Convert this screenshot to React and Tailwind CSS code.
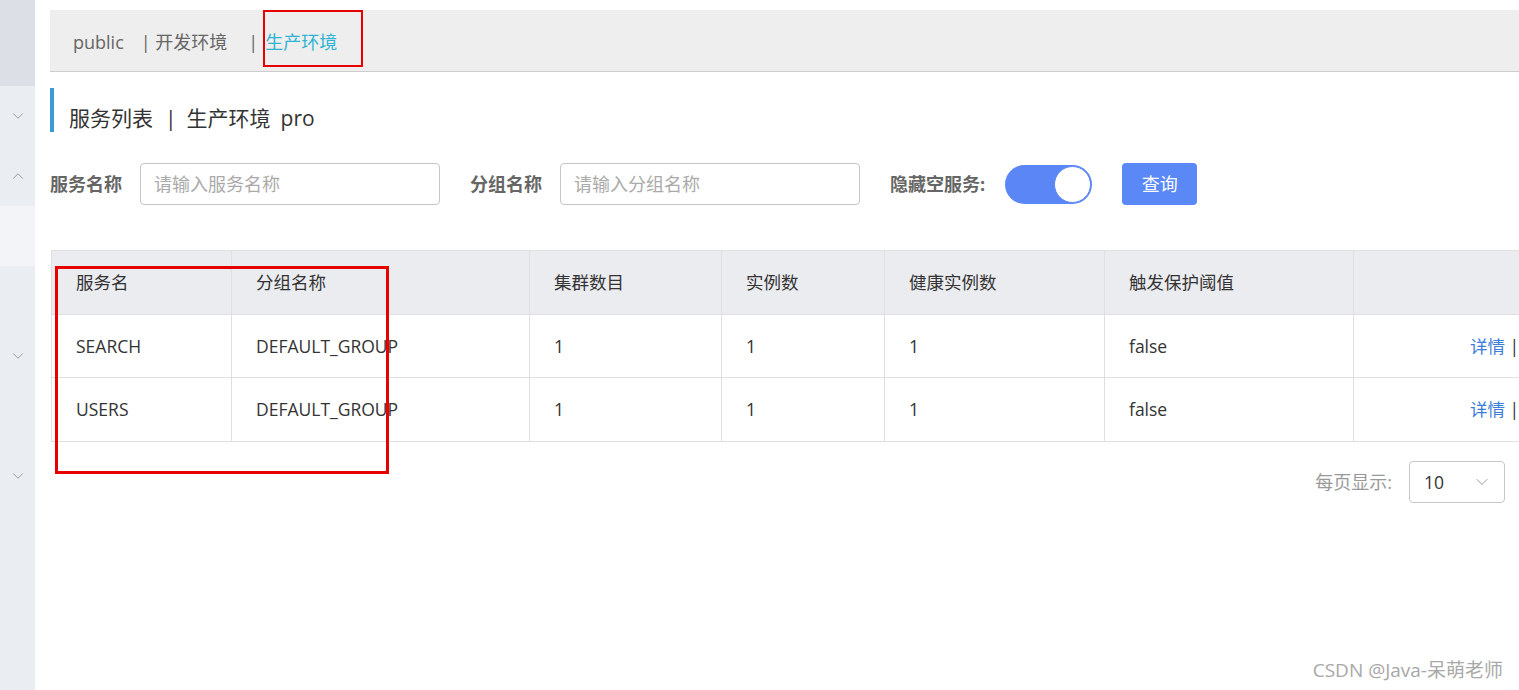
import React from 'react';
import { ChevronDown, ChevronUp } from 'lucide-react';

const font = { fontFamily: "'Open Sans','Noto Sans CJK SC',sans-serif" };

const rows = [
  { name: 'SEARCH', group: 'DEFAULT_GROUP', clusters: '1', instances: '1', healthy: '1', protect: 'false', h: 'h-[63px]' },
  { name: 'USERS', group: 'DEFAULT_GROUP', clusters: '1', instances: '1', healthy: '1', protect: 'false', h: 'h-[64px]' },
];

const cols = ['w-[180px]', 'w-[298px]', 'w-[192px]', 'w-[163px]', 'w-[220px]', 'w-[249px]', 'w-[240px]'];

function Sidebar() {
  return (
    <div className="w-[35px] flex-shrink-0 flex flex-col bg-[#eaedf1]">
      <div className="h-[86px] bg-[#dcdfe6]" />
      <div className="h-[60px] flex items-center justify-center">
        <ChevronDown className="w-[18px] h-[18px] text-[#999]" strokeWidth={1.3} />
      </div>
      <div className="h-[60px] flex items-center justify-center">
        <ChevronUp className="w-[18px] h-[18px] text-[#999]" strokeWidth={1.3} />
      </div>
      <div className="h-[60px] bg-[#f3f4f7]" />
      <div className="h-[60px]" />
      <div className="h-[60px] flex items-center justify-center">
        <ChevronDown className="w-[18px] h-[18px] text-[#999]" strokeWidth={1.3} />
      </div>
      <div className="h-[60px]" />
      <div className="h-[60px] flex items-center justify-center">
        <ChevronDown className="w-[18px] h-[18px] text-[#999]" strokeWidth={1.3} />
      </div>
    </div>
  );
}

export default function App() {
  return (
    <div className="relative w-[1519px] h-[690px] overflow-hidden bg-white flex text-[17.5px]" style={font}>
      <Sidebar />

      <div className="flex-1 pl-[15px] pt-[10px] min-w-0">
        {/* namespace bar */}
        <div className="h-[62px] bg-[#eeeeee] border-b border-[#cccccc] flex items-center text-[#666] text-[18px] leading-[26px] pt-[2px]">
          <span className="ml-[23px]">public</span>
          <span className="ml-[17px]">| 开发环境</span>
          <span className="ml-[21px]">|</span>
          <span className="relative ml-[7px] text-[#2fb3d4]">
            生产环境
            <span className="absolute left-[-2px] top-[-19px] w-[100px] h-[57px] border-2 border-[#e60000]" />
          </span>
        </div>

        {/* title */}
        <div className="mt-[16px] h-[44px] flex border-l-4 border-[#3c9ad6]">
          <div className="pl-[15px] pt-[20px] text-[21px] text-[#333] leading-none whitespace-nowrap flex">
            <span>服务列表</span>
            <span className="ml-[12px]">|</span>
            <span className="ml-[10px]">生产环境</span>
            <span className="ml-[10px]">pro</span>
          </div>
        </div>

        {/* filters */}
        <div className="mt-[31px] flex items-center h-[42px] text-[18px]">
          <span className="font-bold text-[#666]">服务名称</span>
          <input
            className="ml-[18px] w-[300px] h-[42px] border border-[#c6c6c6] rounded-[4px] px-[13px] outline-none placeholder:text-[#aaa]"
            placeholder="请输入服务名称"
            style={font}
          />
          <span className="ml-[30px] font-bold text-[#666]">分组名称</span>
          <input
            className="ml-[18px] w-[300px] h-[42px] border border-[#c6c6c6] rounded-[4px] px-[13px] outline-none placeholder:text-[#aaa]"
            placeholder="请输入分组名称"
            style={font}
          />
          <span className="ml-[30px] font-bold text-[#666]">隐藏空服务:</span>
          <div className="ml-[20px] w-[87px] h-[39px] rounded-full bg-[#5b86f5] flex items-center justify-end pr-[1px]">
            <div className="w-[37px] h-[37px] rounded-full bg-white border border-[#5b86f5]" />
          </div>
          <button className="ml-[30px] w-[75px] h-[42px] rounded-[4px] bg-[#5b88f7] text-white" style={font}>
            查询
          </button>
        </div>

        {/* table */}
        <div className="relative mt-[45px] ml-[1px]">
          <table className="border-collapse border-t border-l border-[#e0e0e0] table-fixed w-[1542px]">
            <thead>
              <tr className="h-[64px] bg-[#ebecf0] text-[#333]">
                {['服务名', '分组名称', '集群数目', '实例数', '健康实例数', '触发保护阈值', ''].map((h, i) => (
                  <th key={i} className={`${cols[i]} font-normal text-left pl-[24px] border-r border-b border-[#e0e0e0]`}>
                    {h}
                  </th>
                ))}
              </tr>
            </thead>
            <tbody>
              {rows.map((r) => (
                <tr key={r.name} className={`${r.h} text-[#333]`}>
                  <td className="pl-[24px] border-r border-b border-[#e0e0e0]">{r.name}</td>
                  <td className="pl-[24px] border-r border-b border-[#e0e0e0]">{r.group}</td>
                  <td className="pl-[24px] border-r border-b border-[#e0e0e0]">{r.clusters}</td>
                  <td className="pl-[24px] border-r border-b border-[#e0e0e0]">{r.instances}</td>
                  <td className="pl-[24px] border-r border-b border-[#e0e0e0]">{r.healthy}</td>
                  <td className="pl-[24px] border-r border-b border-[#e0e0e0]">{r.protect}</td>
                  <td className="pl-[116px] border-b border-[#e0e0e0] whitespace-nowrap">
                    <span className="text-[#3b7dd8]">详情</span> |
                  </td>
                </tr>
              ))}
            </tbody>
          </table>
          {/* annotation box */}
          <div className="absolute left-[4px] top-[16px] w-[334px] h-[208px] border-[3px] border-[#e60000]" />
        </div>

        {/* pagination */}
        <div className="mt-[19px] flex items-center justify-end pr-[14px]">
          <span className="text-[#999] text-[18px]">每页显示:</span>
          <div className="ml-[17px] w-[96px] h-[42px] border border-[#c6c6c6] rounded-[4px] flex items-center justify-between pl-[14px] pr-[12px] text-[#333]">
            <span>10</span>
            <ChevronDown className="w-[20px] h-[20px] text-[#999]" strokeWidth={1.2} />
          </div>
        </div>
      </div>

      {/* watermark */}
      <div className="absolute right-[16px] bottom-[6px] text-[#a8a8a8] text-[19px]">CSDN @Java-呆萌老师</div>
    </div>
  );
}
